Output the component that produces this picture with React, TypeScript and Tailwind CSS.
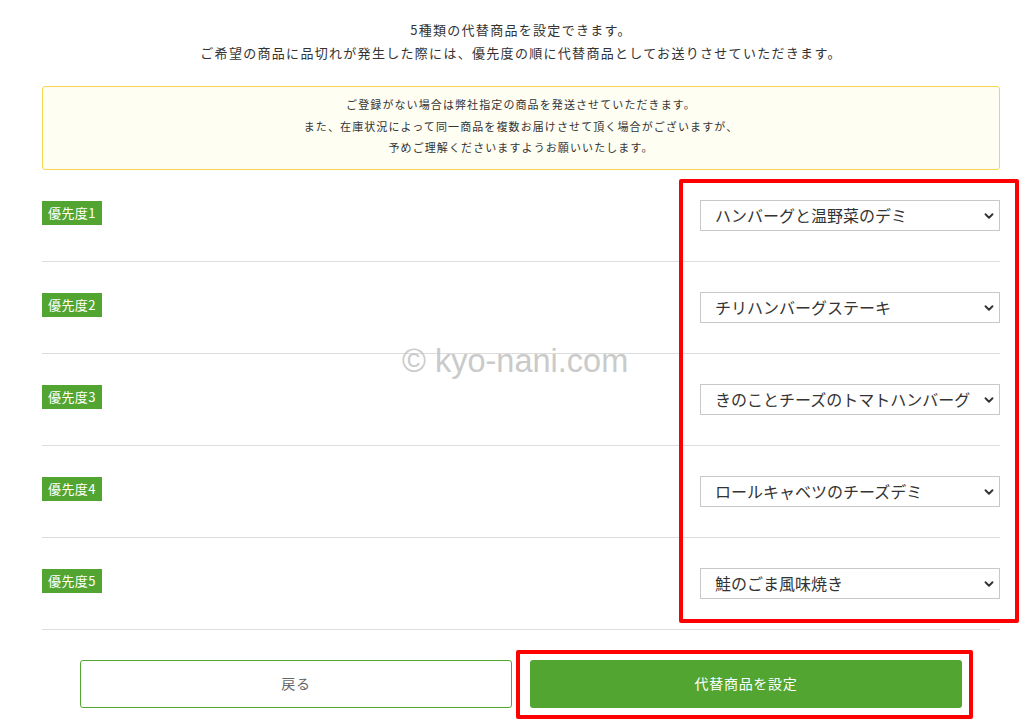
import { ChevronDown } from "lucide-react";

const jp = "font-['Meiryo','Noto_Sans_CJK_JP',sans-serif]";

// priority rows with the selected item
const rows = [
    { label: "優先度1", value: "ハンバーグと温野菜のデミ" },
    { label: "優先度2", value: "チリハンバーグステーキ" },
    { label: "優先度3", value: "きのことチーズのトマトハンバーグ" },
    { label: "優先度4", value: "ロールキャベツのチーズデミ" },
    { label: "優先度5", value: "鮭のごま風味焼き" },
];

const PriorityRow = ({ label, value }: { label: string; value: string }) => (
    <div className="flex items-start justify-between pt-[30px] pb-[30px] border-b border-[#dddddd]">
        <span className="mt-[1px] bg-[#53a531] text-white text-[13px] leading-[24px] px-[6px] tracking-[0.03em]">
            {label}
        </span>
        <div className="relative w-[300px] h-[31px] border border-[#c8c8c8] bg-white">
            <div className="pl-[14px] pr-[30px] text-[16px] leading-[29px] text-[#333] whitespace-nowrap overflow-hidden">
                {value}
            </div>
            <ChevronDown
                className="absolute right-[3px] top-[8px] text-[#333]"
                size={14}
                strokeWidth={3.2}
            />
        </div>
    </div>
);

export default function App() {
    return (
        <div className={`relative min-h-[728px] bg-white text-[#333] ${jp}`}>
            <div className="ml-[42px] w-[958px] pt-[18px]">
                <div className="text-center text-[13px] leading-[23px] tracking-[0.1em]">
                    <p>5種類の代替商品を設定できます。</p>
                    <p>ご希望の商品に品切れが発生した際には、優先度の順に代替商品としてお送りさせていただきます。</p>
                </div>

                <div className="mt-[22px] border border-[#f6d54f] rounded-[3px] bg-[#fffef3] pt-[7px] pb-[10px] text-center text-[11px] leading-[21.5px] tracking-[0.1em]">
                    <p>ご登録がない場合は弊社指定の商品を発送させていただきます。</p>
                    <p>また、在庫状況によって同一商品を複数お届けさせて頂く場合がございますが、</p>
                    <p>予めご理解くださいますようお願いいたします。</p>
                </div>

                <div>
                    {rows.map((r) => (
                        <PriorityRow key={r.label} label={r.label} value={r.value} />
                    ))}
                </div>

                <div className="flex justify-center gap-[18px] pt-[30px]">
                    <button className="w-[432px] h-[48px] border border-[#53a531] rounded-[3px] bg-white text-[14px] text-[#666] tracking-[0.05em]">
                        戻る
                    </button>
                    <button className="w-[432px] h-[48px] rounded-[3px] bg-[#53a531] text-[14px] text-white tracking-[0.05em]">
                        代替商品を設定
                    </button>
                </div>
            </div>

            {/* annotation boxes */}
            <div className="absolute left-[679px] top-[179px] w-[340px] h-[444px] border-[4px] border-[#ff0000] rounded-[2px] pointer-events-none" />
            <div className="absolute left-[516px] top-[650px] w-[457px] h-[69px] border-[4px] border-[#ff0000] rounded-[2px] pointer-events-none" />

            {/* watermark */}
            <div className="absolute left-[402px] top-[340px] text-[32.5px] leading-[42px] text-[#bdbdbd] opacity-80 font-['Liberation_Sans',Arial,sans-serif] pointer-events-none whitespace-nowrap">
                © kyo-nani.com
            </div>
        </div>
    );
}
